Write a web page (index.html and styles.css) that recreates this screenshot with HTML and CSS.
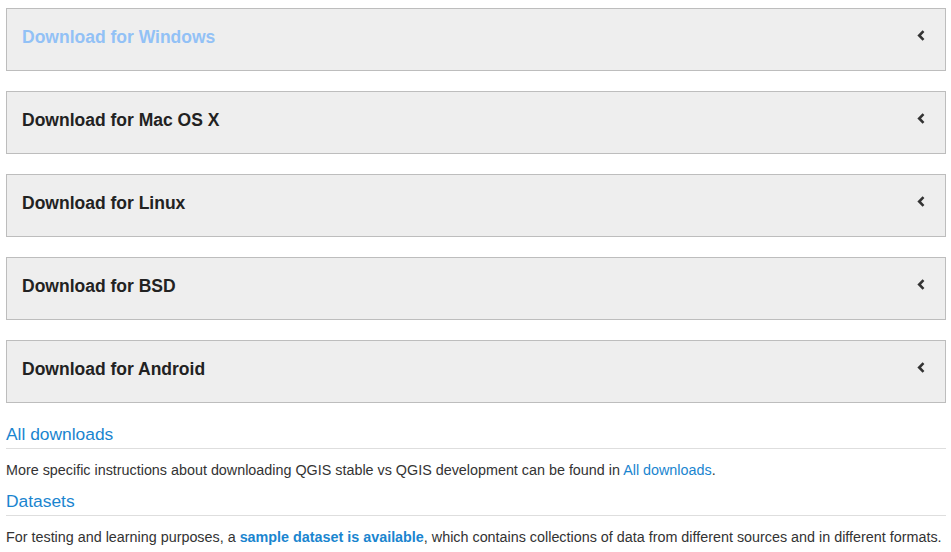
FILE: index.html
```html
<!DOCTYPE html>
<html>
<head>
<meta charset="utf-8">
<link rel="stylesheet" href="styles.css">
</head>
<body>
<div class="page">
  <div class="panels">
    <div class="panel">
      <span class="panel-title active">Download for Windows</span>
      <svg class="chev" width="8" height="11" viewBox="0 0 8 11"><path d="M6.5 1.2 L2.2 5.5 L6.5 9.8" fill="none" stroke="#333" stroke-width="2.6"/></svg>
    </div>
    <div class="panel">
      <span class="panel-title">Download for Mac OS X</span>
      <svg class="chev" width="8" height="11" viewBox="0 0 8 11"><path d="M6.5 1.2 L2.2 5.5 L6.5 9.8" fill="none" stroke="#333" stroke-width="2.6"/></svg>
    </div>
    <div class="panel">
      <span class="panel-title">Download for Linux</span>
      <svg class="chev" width="8" height="11" viewBox="0 0 8 11"><path d="M6.5 1.2 L2.2 5.5 L6.5 9.8" fill="none" stroke="#333" stroke-width="2.6"/></svg>
    </div>
    <div class="panel">
      <span class="panel-title">Download for BSD</span>
      <svg class="chev" width="8" height="11" viewBox="0 0 8 11"><path d="M6.5 1.2 L2.2 5.5 L6.5 9.8" fill="none" stroke="#333" stroke-width="2.6"/></svg>
    </div>
    <div class="panel">
      <span class="panel-title">Download for Android</span>
      <svg class="chev" width="8" height="11" viewBox="0 0 8 11"><path d="M6.5 1.2 L2.2 5.5 L6.5 9.8" fill="none" stroke="#333" stroke-width="2.6"/></svg>
    </div>
  </div>

  <h2 class="section first">All downloads</h2>
  <p class="text">More specific instructions about downloading QGIS stable vs QGIS development can be found in <a href="#" class="link">All downloads</a>.</p>

  <h2 class="section">Datasets</h2>
  <p class="text">For testing and learning purposes, a <a href="#" class="link strong">sample dataset is available</a>, which contains collections of data from different sources and in different formats.</p>
</div>
</body>
</html>
```

FILE: styles.css
```css
html, body {
  margin: 0;
  padding: 0;
  background: #fff;
}

body {
  font-family: "Liberation Sans", Arial, sans-serif;
  color: #333;
}

.page {
  width: 940px;
  padding: 8px 0 0 6px;
}

.panels {
  display: flex;
  flex-direction: column;
  gap: 20px;
}

.panel {
  height: 61px;
  box-sizing: content-box;
  border: 1px solid #bdbdbd;
  background: #eeeeee;
  display: flex;
  align-items: flex-start;
  justify-content: space-between;
  padding: 0 20px 0 15px;
}

.panel-title {
  font-size: 17.5px;
  font-weight: bold;
  line-height: 20px;
  margin-top: 18px;
  color: #222;
}

.panel-title.active {
  color: #92c1f6;
}

.chev {
  display: block;
  margin-top: 21px;
}

.section {
  font-size: 17.4px;
  font-weight: normal;
  line-height: 20px;
  color: #1a85cf;
  margin: 11px 0 0;
  padding-bottom: 4px;
  border-bottom: 1px solid #dedede;
}

.section.first {
  margin-top: 21px;
}

.text {
  font-size: 14.35px;
  line-height: 20px;
  margin: 11px 0 0;
  color: #333;
}

.link {
  color: #1a85cf;
  text-decoration: none;
}

.link.strong {
  font-weight: bold;
}
```
